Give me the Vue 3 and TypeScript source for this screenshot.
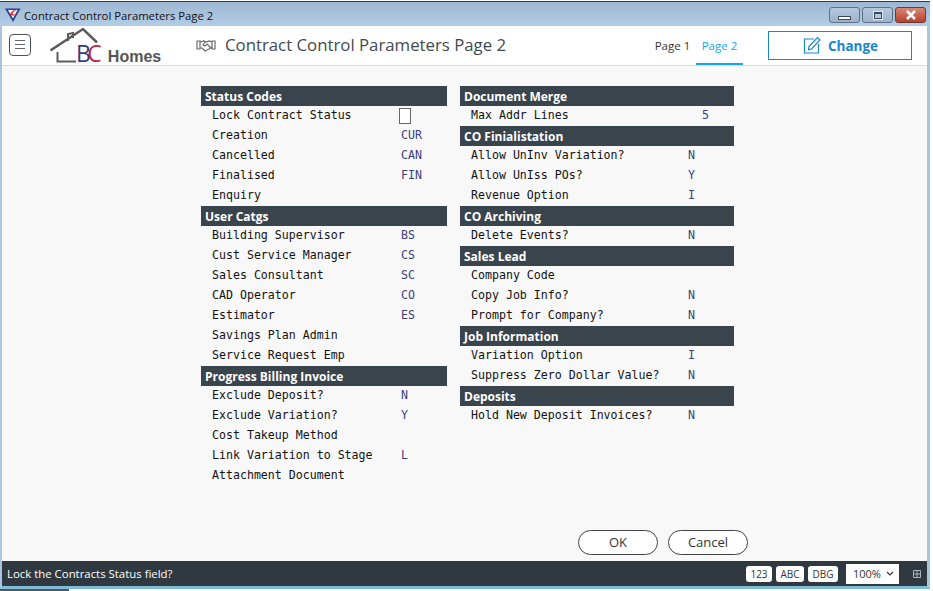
<script setup lang="ts">
interface Row { label: string; value?: string; check?: boolean; right?: boolean }
interface Section { title: string; rows: Row[] }

const leftColumn: Section[] = [
  { title: 'Status Codes', rows: [
    { label: 'Lock Contract Status', check: true },
    { label: 'Creation', value: 'CUR' },
    { label: 'Cancelled', value: 'CAN' },
    { label: 'Finalised', value: 'FIN' },
    { label: 'Enquiry' },
  ] },
  { title: 'User Catgs', rows: [
    { label: 'Building Supervisor', value: 'BS' },
    { label: 'Cust Service Manager', value: 'CS' },
    { label: 'Sales Consultant', value: 'SC' },
    { label: 'CAD Operator', value: 'CO' },
    { label: 'Estimator', value: 'ES' },
    { label: 'Savings Plan Admin' },
    { label: 'Service Request Emp' },
  ] },
  { title: 'Progress Billing Invoice', rows: [
    { label: 'Exclude Deposit?', value: 'N' },
    { label: 'Exclude Variation?', value: 'Y' },
    { label: 'Cost Takeup Method' },
    { label: 'Link Variation to Stage', value: 'L' },
    { label: 'Attachment Document' },
  ] },
]

const rightColumn: Section[] = [
  { title: 'Document Merge', rows: [{ label: 'Max Addr Lines', value: '5', right: true }] },
  { title: 'CO Finialistation', rows: [
    { label: 'Allow UnInv Variation?', value: 'N' },
    { label: 'Allow UnIss POs?', value: 'Y' },
    { label: 'Revenue Option', value: 'I' },
  ] },
  { title: 'CO Archiving', rows: [{ label: 'Delete Events?', value: 'N' }] },
  { title: 'Sales Lead', rows: [
    { label: 'Company Code' },
    { label: 'Copy Job Info?', value: 'N' },
    { label: 'Prompt for Company?', value: 'N' },
  ] },
  { title: 'Job Information', rows: [
    { label: 'Variation Option', value: 'I' },
    { label: 'Suppress Zero Dollar Value?', value: 'N' },
  ] },
  { title: 'Deposits', rows: [{ label: 'Hold New Deposit Invoices?', value: 'N' }] },
]

const columns = [
  { key: 'left', sections: leftColumn },
  { key: 'right', sections: rightColumn },
]
</script>

<template>
  <div class="screen">
    <div class="desktop-top"></div>
    <div class="window">
      <div class="titlebar">
        <svg class="app-icon" width="16" height="16" viewBox="0 0 16 16">
          <path d="M0 1.500h15.500L8 15z" fill="#24409f" />
          <path d="M3 3h9.500L8 11.500z" fill="#fff" />
          <path d="M12.500 2C8.500 3 5.500 5 5 8c2.500 1.200 5.500.6 8-1.200-2.200.8-4.600 1-5.600.2C7.600 5.400 10 3.400 12.500 2z" fill="#dc2530" />
        </svg>
        <span class="title-text">Contract Control Parameters Page 2</span>
        <div class="win-buttons">
          <div class="win-btn"><span class="min-glyph"></span></div>
          <div class="win-btn"><span class="max-glyph"></span></div>
          <div class="win-btn close">
            <svg width="14" height="10" viewBox="0 0 14 10">
              <path d="M3 1l8 8M11 1L3 9" stroke="#fff" stroke-width="2.6" fill="none" />
            </svg>
          </div>
        </div>
      </div>

      <header class="app-header">
        <button class="menu-btn" type="button">
          <span></span><span></span><span></span>
        </button>
        <div class="logo">
          <svg width="112" height="36" viewBox="0 0 112 36" class="logo-house" fill="none" stroke="#5c5c5c">
            <path d="M.5 23.500L33 2l14 13.500" stroke-width="2.500" />
            <path d="M18 14V7l5-1v5" stroke-width="2" />
            <path d="M7.500 25v9.500H26" stroke-width="2" />
          </svg>
          <div class="logo-word">
            <span class="logo-b">B</span><span class="logo-c">C</span><span class="logo-homes">Homes</span>
          </div>
        </div>
        <svg class="hands" width="20" height="14" viewBox="0 0 20 14" fill="none" stroke="#6a6a6a" stroke-width="1.2">
          <path d="M1 3h3v8H1zM16 3h3v8h-3zM4 4l4-1 2 1 3-1 3 1M4 10l2 0 3 3 2-1 2-1 3-2M9 4L7 7l2 1 2-2 4 4" />
        </svg>
        <h1 class="page-title">Contract Control Parameters Page 2</h1>
        <nav class="tabs">
          <span class="tab">Page 1</span>
          <span class="tab active">Page 2</span>
        </nav>
        <button class="change-btn" type="button">
          <svg width="20" height="20" viewBox="0 0 20 20" fill="none" stroke="#1a86d0" stroke-width="1.2">
            <path d="M12 4H2.500v14h14V9" />
            <path d="M7 11.500L15.500 2.500l2.500 2.500L9.500 14l-3 .7z" />
          </svg>
          <span class="change-label">Change</span>
        </button>
      </header>

      <main class="content">
        <div class="columns">
          <div v-for="col in columns" :key="col.key" class="column" :class="col.key">
            <section v-for="section in col.sections" :key="section.title">
              <h2 class="section-title">{{ section.title }}</h2>
              <div v-for="row in section.rows" :key="row.label" class="row">
                <span class="label">{{ row.label }}</span>
                <span v-if="row.check" class="check"></span>
                <span v-else-if="row.value" class="value" :class="{ far: row.right }">{{ row.value }}</span>
              </div>
            </section>
          </div>
        </div>
        <div class="actions">
          <button class="pill" type="button">OK</button>
          <button class="pill" type="button">Cancel</button>
        </div>
      </main>

      <footer class="statusbar">
        <span class="status-text">Lock the Contracts Status field?</span>
        <div class="status-right">
          <span class="chip chip-num">123</span>
          <span class="chip chip-abc">ABC</span>
          <span class="chip chip-dbg">DBG</span>
          <span class="zoom">100%
            <svg width="8" height="5" viewBox="0 0 8 5" fill="none" stroke="#333" stroke-width="1.2"><path d="M1 1l3 3 3-3" /></svg>
          </span>
          <svg class="grid-icon" width="8" height="8" viewBox="0 0 8 8" fill="none" stroke="#aeb4b8"><path d="M.5.500h7v7h-7zM.5 4h7M4 .5v7" /></svg>
        </div>
      </footer>
    </div>
    <div class="desktop-bottom"></div>
  </div>
</template>

<style>
html, body { margin: 0; background: #fff; }
</style>

<style scoped>
.screen {
  width: 933px;
  height: 591px;
  overflow: hidden;
  display: flex;
  flex-direction: column;
  font-family: "Open Sans", "Noto Sans", sans-serif;
}
.desktop-top {
  height: 1px;
  margin-top: 1px;
  width: 930px;
  flex: none;
  background: #3a3a3a;
}
.desktop-bottom {
  width: 69px;
  height: 2px;
  flex: none;
  background: #555;
}
.window {
  width: 930px;
  height: 587px;
  flex: none;
  display: flex;
  flex-direction: column;
  box-sizing: border-box;
  border: 2px solid #a9c5e0;
  border-width: 0 3px 3px 2px;
  border-bottom-color: #7fbcd8;
}
.titlebar {
  height: 24px;
  flex: none;
  display: flex;
  align-items: center;
  box-sizing: border-box;
  background: linear-gradient(#9db6d2, #b4cde6);
  margin: 0 -3px 0 -2px;
  padding: 2px 4px 0 5px;
}
.app-icon { flex: none; }
.title-text { margin-left: 3px; font-size: 11.3px; color: #111; }
.win-buttons { margin-left: auto; display: flex; gap: 2px; }
.win-btn {
  width: 31px;
  height: 16px;
  box-sizing: border-box;
  border: 1px solid #5e7187;
  border-radius: 3px;
  background: linear-gradient(#b5c7dc, #9db3cc);
  display: flex;
  align-items: center;
  justify-content: center;
}
.win-btn.close { background: linear-gradient(#d98877, #b5402c); border-color: #6e3a35; }
.min-glyph { width: 11px; height: 2px; margin-top: 5px; border: 1px solid #3d4a58; background: #fff; }
.max-glyph { width: 6px; height: 4px; border: 1px solid #3d4a58; border-width: 2px 1px 1px; background: #b5c7dc; outline: 1px solid #dfe7f0; }

.app-header {
  height: 40px;
  flex: none;
  display: flex;
  align-items: center;
  background: #fff;
  border-bottom: 1px solid #dcdcdc;
  box-sizing: border-box;
  padding: 0 15px 0 7px;
}
.menu-btn {
  width: 22px;
  height: 22px;
  margin-top: -2px;
  padding: 0;
  background: #fff;
  border: 1px solid #4a5258;
  border-radius: 4px;
  display: flex;
  flex-direction: column;
  align-items: center;
  justify-content: center;
  gap: 3px;
}
.menu-btn span { width: 10px; height: 1px; background: #666; }
.logo {
  position: relative;
  width: 112px;
  height: 36px;
  margin: -2px 0 0 19px;
  flex: none;
}
.logo-house { position: absolute; left: 0; top: 0; }
.logo-word {
  position: absolute;
  left: 26px;
  top: 13px;
  display: flex;
  align-items: baseline;
  line-height: 26px;
  white-space: nowrap;
}
.logo-b, .logo-c { font-size: 23px; font-weight: 400; }
.logo-b { color: #3c3a78; letter-spacing: -3.500px; }
.logo-c { color: #c22a3a; }
.logo-homes {
  margin-left: 6px;
  font-family: "Liberation Sans", sans-serif;
  font-size: 16px;
  font-weight: 700;
  color: #555;
}
.hands { margin: -2px 0 0 34px; flex: none; }
.page-title {
  margin: -2px 0 0 9px;
  font-size: 16.800px;
  font-weight: 400;
  color: #3f4a52;
}
.tabs { margin-left: auto; display: flex; height: 39px; align-self: flex-start; }
.tab {
  width: 47px;
  font-size: 11.5px;
  line-height: 40px;
  text-align: center;
  color: #333;
  box-sizing: border-box;
}
.tab.active { color: #1ba3ec; border-bottom: 2px solid #12a5f0; }
.change-btn {
  width: 144px;
  height: 29px;
  margin: -1px 0 0 25px;
  background: #fff;
  border: 1px solid #1a86d0;
  color: #1a86d0;
  font: 700 13.500px "Open Sans", sans-serif;
  display: flex;
  align-items: center;
  justify-content: center;
  gap: 6px;
  padding: 0;
}
.change-label { margin-top: 2px; }

.content {
  flex: 1;
  min-height: 0;
  display: flex;
  flex-direction: column;
  background: #f8f8f8;
}
.columns {
  display: flex;
  gap: 13px;
  padding: 20px 0 0 199px;
}
.column.left { width: 246px; }
.column.right { width: 274px; }
.section-title {
  margin: 0;
  height: 20px;
  padding-left: 4px;
  background: #3a444d;
  color: #fff;
  font-size: 12px;
  font-weight: 700;
  line-height: 22px;
}
.row {
  height: 20px;
  box-sizing: border-box;
  padding-bottom: 2px;
  display: flex;
  align-items: center;
  font-family: "DejaVu Sans Mono", monospace;
  font-size: 11.6px;
  color: #111;
}
.label { padding-left: 11px; width: 200px; flex: none; white-space: pre; box-sizing: border-box; }
.right .label { width: 228px; }
.value { color: #3b3f7a; }
.value.far { margin-left: 14px; }
.check {
  width: 10px;
  height: 14px;
  margin: 2px 0 0 -2px;
  background: #fff;
  border: 1px solid #666;
}
.actions {
  margin-top: auto;
  display: flex;
  gap: 10px;
  padding: 0 0 6px 576px;
}
.pill {
  width: 80px;
  height: 25px;
  padding: 0 0 2px;
  background: #fff;
  border: 1px solid #444;
  border-radius: 13px;
  font: 400 13px "Open Sans", sans-serif;
  color: #333;
}
.statusbar {
  height: 25px;
  flex: none;
  display: flex;
  align-items: center;
  justify-content: space-between;
  background: #30393f;
  padding: 0 6px 0 5px;
}
.status-text { color: #fff; font-size: 11.4px; }
.status-right { display: flex; align-items: center; gap: 4px; }
.chip {
  height: 16px;
  text-align: center;
  background: #fff;
  border-radius: 3px;
  font-size: 10px;
  line-height: 16px;
  color: #333;
}
.chip-num { width: 26px; }
.chip-abc { width: 28px; }
.chip-dbg { width: 30px; }
.zoom {
  width: 53px;
  height: 20px;
  box-sizing: border-box;
  margin-left: 4px;
  background: #fff;
  font-size: 11px;
  line-height: 21px;
  color: #333;
  padding-left: 7px;
  display: flex;
  align-items: center;
  gap: 5px;
}
.grid-icon { margin-left: 10px; }
</style>
